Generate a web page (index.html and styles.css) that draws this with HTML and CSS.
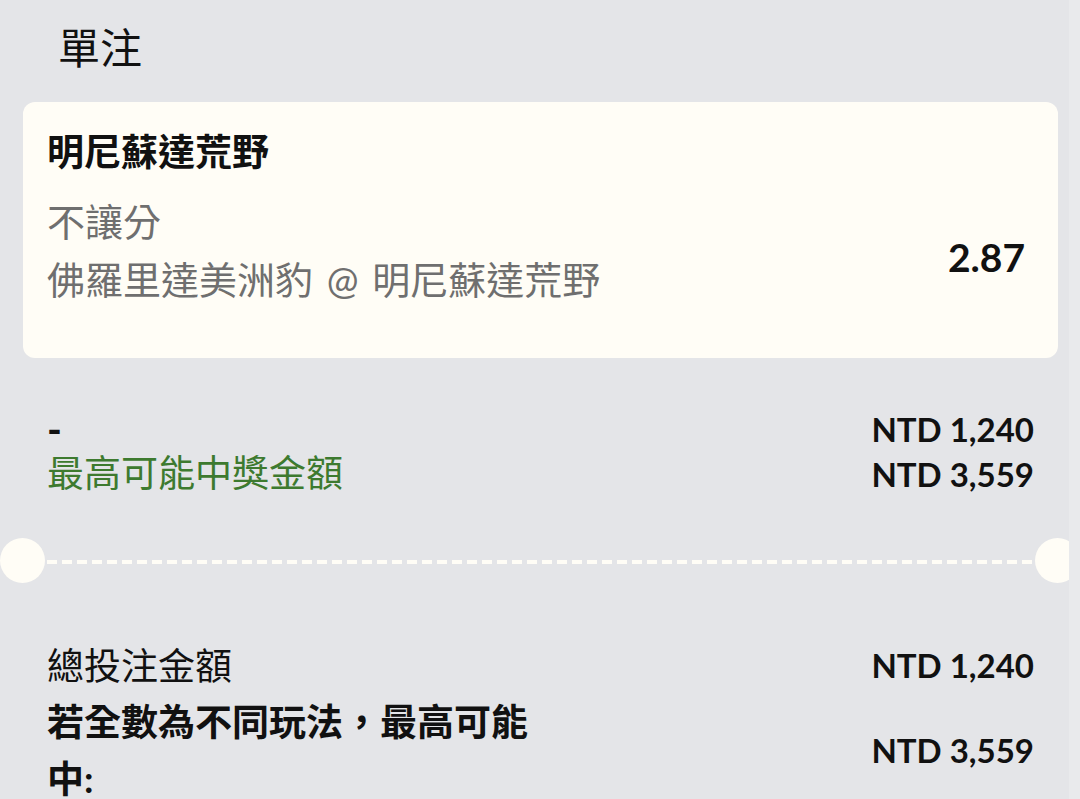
FILE: index.html
```html
<!DOCTYPE html>
<html lang="zh-Hant">
<head>
    <meta charset="UTF-8">
    <meta name="viewport" content="width=device-width, initial-scale=1.0">
    <title>單注</title>
    <link rel="stylesheet" href="styles.css">
</head>
<body>

    <div class="page">
        <h2 class="title">單注</h2>

        <!-- tarjeta de la apuesta -->
        <div class="bet-card">
            <div class="bet-info">
                <div class="team">明尼蘇達荒野</div>
                <div class="market">不讓分</div>
                <div class="match">佛羅里達美洲豹 @ 明尼蘇達荒野</div>
            </div>
            <div class="odds">2.87</div>
        </div>

        <div class="summary">
            <div class="row">
                <span class="dash">-</span>
                <span class="amount">NTD 1,240</span>
            </div>
            <div class="row">
                <span class="win-label">最高可能中獎金額</span>
                <span class="amount">NTD 3,559</span>
            </div>
        </div>

        <!-- separador tipo ticket -->
        <div class="ticket-cut">
            <div class="notch"></div>
            <div class="dashes"></div>
            <div class="notch"></div>
        </div>

        <div class="totals">
            <div class="row row-center">
                <span class="total-label">總投注金額</span>
                <span class="amount">NTD 1,240</span>
            </div>
            <div class="row row-center row-max">
                <span class="max-label">若全數為不同玩法，最高可能中:</span>
                <span class="amount">NTD 3,559</span>
            </div>
        </div>

        <div class="scroll-track"></div>
    </div>

</body>
</html>
```

FILE: styles.css
```css
body {
    margin: 0;
    background-color: #e4e5e8;
    font-family: Lato, "Noto Sans CJK TC", sans-serif;
    color: #111;
}
.page {
    position: relative;
    width: 1080px;
    height: 799px;
    overflow: hidden;
    background-color: #e4e5e8;
}
.title {
    margin: 0;
    padding: 19px 0 0 58px;
    font-size: 42px;
    font-weight: normal;
    line-height: 58px;
}
.bet-card {
    display: flex;
    justify-content: space-between;
    margin: 25px 22px 0 23px;
    padding: 24px 33px 50px 24px;
    background-color: #fffdf6;
    border-radius: 12px;
}
.team {
    font-size: 37px;
    font-weight: bold;
    line-height: 52px;
}
.market, .match {
    font-size: 38px;
    line-height: 58px;
    color: #6f6f6f;
}
.market {
    margin-top: 14px;
}
.match {
    word-spacing: 4px;
}
.odds {
    align-self: center;
    margin-top: 80px;
    font-size: 39px;
    font-weight: bold;
    line-height: 46px;
}
.summary {
    padding: 50px 46px 0 47px;
}
.row {
    display: flex;
    justify-content: space-between;
    align-items: baseline;
    line-height: 43px;
}
.dash {
    align-self: center;
    font-size: 40px;
    font-weight: bold;
    line-height: 1px;
}
.amount {
    font-size: 33px;
    font-weight: bold;
}
.win-label {
    font-size: 37px;
    color: #3d7a2f;
}
.ticket-cut {
    display: flex;
    align-items: center;
    margin-top: 42px;
}
.notch {
    flex: none;
    width: 45px;
    height: 45px;
    border-radius: 50%;
    background-color: #fffdf6;
}
.dashes {
    flex: 1;
    height: 4px;
    margin: 2px 2px 0;
    background: repeating-linear-gradient(90deg, #fffdf6 0 10px, transparent 10px 15px);
}
.totals {
    padding: 60px 46px 0 47px;
}
.row-center {
    align-items: center;
    line-height: 45px;
}
.total-label {
    font-size: 37px;
}
.row-max {
    margin-top: 5px;
}
.max-label {
    width: 500px;
    font-size: 37px;
    font-weight: bold;
    line-height: 57px;
}
.scroll-track {
    position: absolute;
    top: 0;
    right: 0;
    width: 11px;
    height: 100%;
    background-color: #e9eaec;
}
```
